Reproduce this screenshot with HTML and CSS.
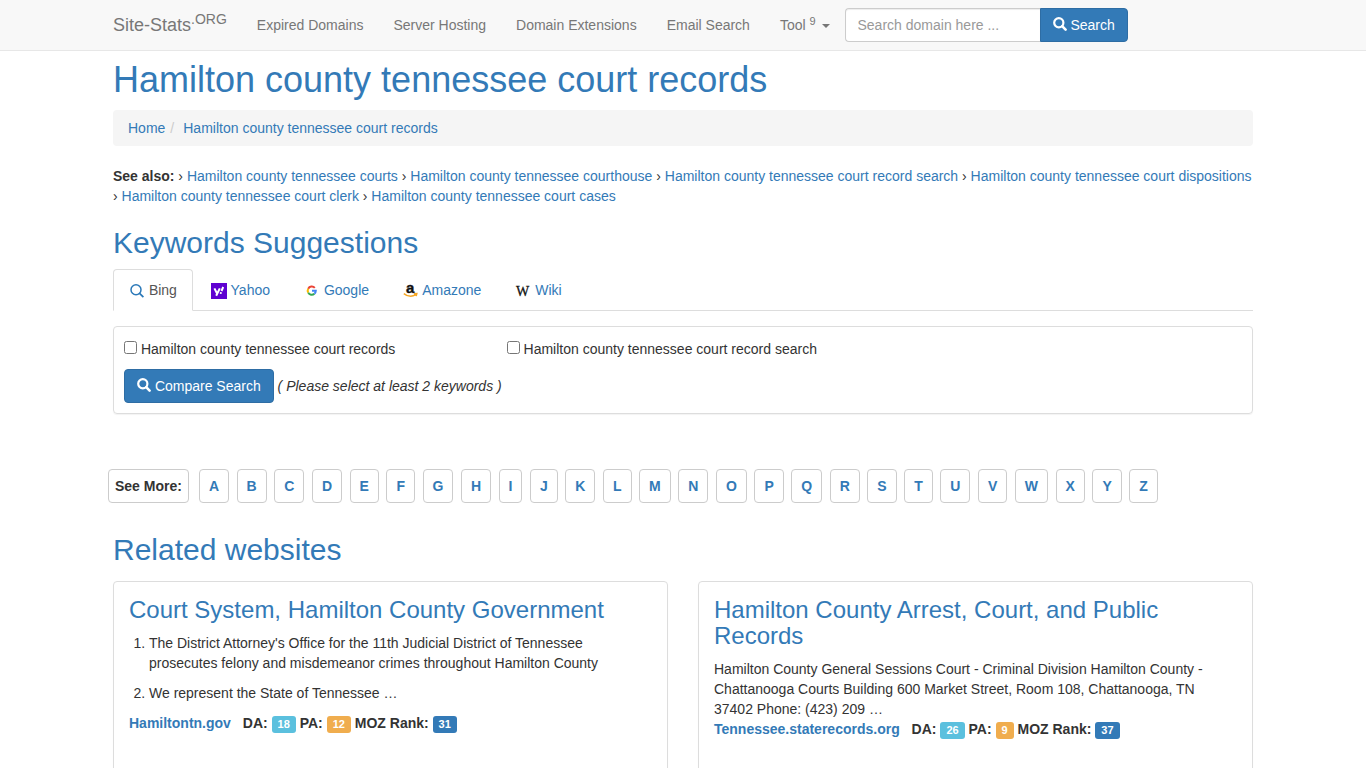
FILE: index.html
```
<!DOCTYPE html>
<html lang="en">
<head>
    <meta charset="UTF-8">
    <meta name="viewport" content="width=device-width, initial-scale=1.0">
    <title>Hamilton county tennessee court records</title>
    <link rel="stylesheet" href="styles.css">
</head>
<body>

<!-- Icon shared by the search buttons -->
<svg class="sprite" aria-hidden="true">
    <symbol id="search" viewBox="0 0 14 14">
        <circle cx="5.8" cy="5.8" r="4.6" fill="none" stroke="currentColor" stroke-width="2.2"/>
        <path d="M9.2 9.2l3.4 3.4" stroke="currentColor" stroke-width="2.6" stroke-linecap="round"/>
    </symbol>
</svg>

<header class="navbar">
    <div class="container navbar-inner">
        <a class="brand" href="#">Site-Stats<sup>.ORG</sup></a>
        <nav class="nav">
            <a href="#">Expired Domains</a>
            <a href="#">Server Hosting</a>
            <a href="#">Domain Extensions</a>
            <a href="#">Email Search</a>
            <a href="#">Tool <sup>9</sup> <span class="caret"></span></a>
        </nav>
        <form class="search-form">
            <input type="text" aria-label="Search domain" placeholder="Search domain here ...">
            <button type="submit" class="btn"><svg class="glyph"><use href="#search"/></svg> Search</button>
        </form>
    </div>
</header>

<main class="container">
    <h1><a href="#">Hamilton county tennessee court records</a></h1>

    <ol class="breadcrumb">
        <li><a href="#">Home</a></li>
        <li><a href="#">Hamilton county tennessee court records</a></li>
    </ol>

    <div class="see-also">
        <b>See also:</b>
        › <a href="#">Hamilton county tennessee courts</a>
        › <a href="#">Hamilton county tennessee courthouse</a>
        › <a href="#">Hamilton county tennessee court record search</a>
        › <a href="#">Hamilton county tennessee court dispositions</a>
        › <a href="#">Hamilton county tennessee court clerk</a>
        › <a href="#">Hamilton county tennessee court cases</a>
    </div>

    <h2>Keywords Suggestions</h2>

    <ul class="tabs">
        <li class="active"><a href="#">
            <svg class="icon" viewBox="0 0 16 16"><circle cx="7" cy="6.8" r="5" fill="none" stroke="#2a78b8" stroke-width="1.5"/><path d="M10.6 10.4l3.8 3.8" stroke="#2a78b8" stroke-width="1.7"/></svg>
            Bing</a></li>
        <li><a href="#">
            <svg class="icon" viewBox="0 0 16 16"><path fill="#5f01d1" d="M0 0h16v16H0z"/><path fill="none" stroke="#fff" stroke-width="2" d="M3.4 5.4l2.4 4.6M8.8 5.4l-3.6 7.4M12.2 4l-1.7 4"/><circle cx="9.8" cy="10" r="1.1" fill="#fff"/></svg>
            Yahoo</a></li>
        <li><a href="#">
            <svg class="icon" viewBox="0 0 16 16" fill="none" stroke-width="2"><path stroke="#ea4335" d="M4.2 5.8A4 4 0 0 1 10.8 4.9"/><path stroke="#fbbc05" d="M4.2 5.8A4 4 0 0 0 4.2 9.6"/><path stroke="#34a853" d="M4.2 9.6A4 4 0 0 0 10.4 10.8"/><path stroke="#4285f4" d="M10.4 10.8A4 4 0 0 0 11.8 7.8H8"/></svg>
            Google</a></li>
        <li><a href="#">
            <svg class="icon" viewBox="0 0 16 16"><text class="logo-a" x="3" y="10">a</text><path fill="none" stroke="#f5a623" stroke-width="1.5" d="M.8 10.6Q7 15.4 12.8 11.7M11 10.7l2.8-.2-.6 2.6"/></svg>
            Amazone</a></li>
        <li><a href="#">
            <svg class="icon" viewBox="0 0 16 16"><text class="logo-w" x="1" y="13">W</text></svg>
            Wiki</a></li>
    </ul>

    <form class="panel compare">
        <div class="keywords">
            <label><input type="checkbox"> Hamilton county tennessee court records</label>
            <label><input type="checkbox"> Hamilton county tennessee court record search</label>
        </div>
        <button type="button" class="btn"><svg class="glyph"><use href="#search"/></svg> Compare Search</button>
        <i>( Please select at least 2 keywords )</i>
    </form>

    <div class="see-more">
        <b>See More:</b>
        <ul class="letters">
            <li><a href="#">A</a></li>
            <li><a href="#">B</a></li>
            <li><a href="#">C</a></li>
            <li><a href="#">D</a></li>
            <li><a href="#">E</a></li>
            <li><a href="#">F</a></li>
            <li><a href="#">G</a></li>
            <li><a href="#">H</a></li>
            <li><a href="#">I</a></li>
            <li><a href="#">J</a></li>
            <li><a href="#">K</a></li>
            <li><a href="#">L</a></li>
            <li><a href="#">M</a></li>
            <li><a href="#">N</a></li>
            <li><a href="#">O</a></li>
            <li><a href="#">P</a></li>
            <li><a href="#">Q</a></li>
            <li><a href="#">R</a></li>
            <li><a href="#">S</a></li>
            <li><a href="#">T</a></li>
            <li><a href="#">U</a></li>
            <li><a href="#">V</a></li>
            <li><a href="#">W</a></li>
            <li><a href="#">X</a></li>
            <li><a href="#">Y</a></li>
            <li><a href="#">Z</a></li>
        </ul>
    </div>

    <h2>Related websites</h2>

    <div class="sites">
        <article class="panel site">
            <h3><a href="#">Court System, Hamilton County Government</a></h3>
            <ol>
                <li>The District Attorney's Office for the 11th Judicial District of Tennessee prosecutes felony and misdemeanor crimes throughout Hamilton County</li>
                <li>We represent the State of Tennessee …</li>
            </ol>
            <div class="rank">
                <a href="#">Hamiltontn.gov</a>
                DA: <span class="label info">18</span>
                PA: <span class="label warning">12</span>
                MOZ Rank: <span class="label primary">31</span>
            </div>
        </article>
        <article class="panel site">
            <h3><a href="#">Hamilton County Arrest, Court, and Public Records</a></h3>
            <p>Hamilton County General Sessions Court - Criminal Division Hamilton County - Chattanooga Courts Building 600 Market Street, Room 108, Chattanooga, TN 37402 Phone: (423) 209 …</p>
            <div class="rank">
                <a href="#">Tennessee.staterecords.org</a>
                DA: <span class="label info">26</span>
                PA: <span class="label warning">9</span>
                MOZ Rank: <span class="label primary">37</span>
            </div>
        </article>
    </div>
</main>

</body>
</html>
```

FILE: styles.css
```
* {
    box-sizing: border-box;
}

body {
    margin: 0;
    font-family: "Liberation Sans", Arial, sans-serif;
    font-size: 14px;
    line-height: 20px;
    color: #333;
    background: #fff;
}

a {
    color: #337ab7;
    text-decoration: none;
}

a:hover {
    text-decoration: underline;
}

h1, h2, h3 {
    margin: 0 0 10px;
    font-weight: 500;
    color: #337ab7;
}

h1 {
    margin-top: 9px;
    font-size: 36px;
    line-height: 40px;
}

h2 {
    font-size: 30px;
    line-height: 33px;
}

h3 {
    font-size: 24px;
    line-height: 26px;
}

ul, ol {
    margin: 0;
    padding: 0;
}

.sprite {
    display: none;
}

.container {
    max-width: 1170px;
    margin: 0 auto;
    padding: 0 15px;
}

/* Navbar */
.navbar {
    background: #f8f8f8;
    border-bottom: 1px solid #e7e7e7;
}

.navbar-inner {
    display: flex;
    align-items: center;
    min-height: 50px;
}

.navbar a {
    color: #777;
}

.navbar sup {
    line-height: 0;
    vertical-align: 7px;
}

.brand {
    padding-right: 15px;
    font-size: 18px;
}

.brand sup {
    font-size: 14px;
}

.nav {
    display: flex;
}

.nav a {
    padding: 15px;
}

.nav .caret {
    margin-left: 2px;
}

.nav sup {
    font-size: 11px;
    vertical-align: 5px;
}

.caret {
    display: inline-block;
    vertical-align: middle;
    border-top: 4px solid;
    border-left: 4px solid transparent;
    border-right: 4px solid transparent;
}

.search-form {
    display: flex;
}

.search-form input {
    width: 195px;
    height: 34px;
    padding: 6px 12px;
    font: inherit;
    border: 1px solid #ccc;
    border-right: 0;
    border-radius: 4px 0 0 4px;
    box-shadow: inset 0 1px 1px rgba(0, 0, 0, 0.075);
}

.search-form input::placeholder {
    color: #999;
}

.search-form .btn {
    border-radius: 0 4px 4px 0;
}

/* Buttons */
.btn {
    height: 34px;
    padding: 6px 12px;
    font: inherit;
    color: #fff;
    background: #337ab7;
    border: 1px solid #2e6da4;
    border-radius: 4px;
    cursor: pointer;
}

.btn:hover {
    background: #286090;
}

.glyph {
    width: 14px;
    height: 14px;
    vertical-align: -1px;
}

/* Breadcrumb */
.breadcrumb {
    display: flex;
    margin-bottom: 20px;
    padding: 8px 15px;
    list-style: none;
    background: #f5f5f5;
    border-radius: 4px;
}

.breadcrumb li + li::before {
    content: "/";
    padding: 0 9px 0 5px;
    color: #ccc;
}

.see-also {
    margin-bottom: 20px;
}

/* Tabs */
.tabs {
    display: flex;
    gap: 2px;
    margin-bottom: 15px;
    list-style: none;
    border-bottom: 1px solid #ddd;
}

.tabs li {
    margin-bottom: -1px;
}

.tabs a {
    display: block;
    padding: 10px 15px;
    border: 1px solid transparent;
    border-radius: 4px 4px 0 0;
}

.tabs .active a {
    color: #555;
    background: #fff;
    border-color: #ddd #ddd #fff;
}

.icon {
    width: 16px;
    height: 16px;
    overflow: visible;
    vertical-align: middle;
}

.logo-a {
    font-size: 15px;
    font-weight: bold;
    fill: #111;
    stroke: #111;
    stroke-width: 0.4px;
}

.logo-w {
    font-family: "Liberation Serif", serif;
    font-size: 14px;
    fill: #111;
    stroke: #111;
    stroke-width: 0.3px;
}

/* Panels */
.panel {
    border: 1px solid #ddd;
    border-radius: 4px;
    box-shadow: 0 1px 1px rgba(0, 0, 0, 0.05);
}

.compare {
    margin-bottom: 55px;
    padding: 12px 10px 10px;
}

.keywords {
    display: grid;
    grid-template-columns: repeat(3, 1fr);
    gap: 30px;
    margin-bottom: 10px;
}

.keywords input {
    width: 13px;
    height: 13px;
    margin: 0;
}

/* Letters */
.see-more {
    display: flex;
    gap: 10px;
    max-width: 1050px;
    margin: 0 0 30px -5px;
    font-weight: bold;
}

.see-more > b,
.letters a {
    display: block;
    padding: 6px;
    white-space: nowrap;
    border: 1px solid #ccc;
    border-radius: 4px;
}

.letters {
    display: flex;
    flex: 1;
    justify-content: space-between;
    list-style: none;
}

.letters a {
    padding: 6px 9px;
}

/* Related websites */
.sites {
    display: grid;
    grid-template-columns: 1fr 1fr;
    gap: 30px;
    margin-top: 15px;
}

.site {
    min-height: 210px;
    padding: 15px;
}

.site ol {
    padding-left: 20px;
}

.site li {
    margin-bottom: 10px;
}

.site p {
    margin: 0;
}

.rank {
    font-weight: bold;
}

.rank a {
    margin-right: 8px;
}

.label {
    display: inline-block;
    padding: 2px 6px 3px;
    font-size: 11px;
    line-height: 12px;
    color: #fff;
    border-radius: 3px;
}

.info {
    background: #5bc0de;
}

.warning {
    background: #f0ad4e;
}

.primary {
    background: #337ab7;
}
```
